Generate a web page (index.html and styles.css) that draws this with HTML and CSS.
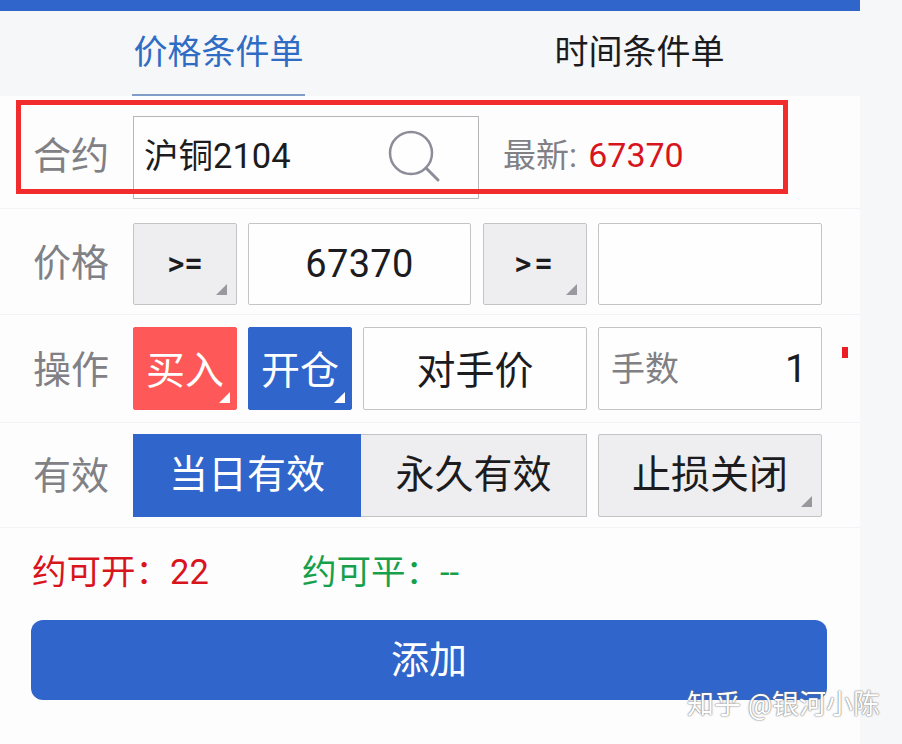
FILE: index.html
```html
<!DOCTYPE html>
<html lang="zh-CN">
<head>
    <meta charset="UTF-8">
    <meta name="viewport" content="width=device-width, initial-scale=1.0">
    <title>条件单</title>
    <link rel="stylesheet" href="styles.css">
</head>
<body>
    <div class="panel">
        <div class="top-bar"></div>
        <div class="tabs">
            <div class="tab tab-active"><span>价格条件单</span></div>
            <div class="tab"><span>时间条件单</span></div>
        </div>

        <div class="row row-contract">
            <div class="label">合约</div>
            <div class="contract-field">
                <span class="contract-name">沪铜2104</span>
                <svg class="search-icon" width="54" height="54" viewBox="0 0 54 54">
                    <circle cx="23" cy="23" r="21" fill="none" stroke="#8d8d99" stroke-width="2.5"/>
                    <path d="M38 38 L50 50" fill="none" stroke="#8d8d99" stroke-width="3" stroke-linecap="round"/>
                </svg>
            </div>
            <div class="latest">最新: <span class="latest-price">67370</span></div>
        </div>

        <div class="row row-price">
            <div class="label">价格</div>
            <div class="cell cell-gray w-104 op-text corner">&gt;=</div>
            <div class="cell w-223 price-value">67370</div>
            <div class="cell cell-gray w-104 op-text op-wide corner">&gt;=</div>
            <div class="cell w-224"></div>
        </div>

        <div class="row row-action">
            <div class="label">操作</div>
            <div class="cell cell-red w-104 corner corner-white">买入</div>
            <div class="cell cell-blue w-104 corner corner-white">开仓</div>
            <div class="cell w-224">对手价</div>
            <div class="cell w-224 qty">
                <span class="qty-label">手数</span>
                <span>1</span>
            </div>
        </div>

        <div class="row row-valid">
            <div class="label">有效</div>
            <div class="segment">
                <div class="cell cell-blue seg-left">当日有效</div>
                <div class="cell cell-gray seg-right">永久有效</div>
            </div>
            <div class="cell cell-gray w-224 corner">止损关闭</div>
        </div>

        <div class="amounts">
            <div class="amount-open">约可开：22</div>
            <div class="amount-close">约可平：--</div>
        </div>

        <div class="add-btn">添加</div>
    </div>

    <div class="red-box"></div>
    <div class="red-dot"></div>
    <div class="watermark">知乎 @银河小陈</div>
</body>
</html>
```

FILE: styles.css
```css
* {
    box-sizing: border-box;
}
html, body {
    margin: 0;
    height: 744px;
    overflow: hidden;
}
body {
    position: relative;
    font-family: Roboto, "Noto Sans CJK SC", sans-serif;
    background-color: #f6f7f9;
    color: #1c1c1e;
}
.panel {
    width: 860px;
    height: 744px;
    background-color: #fdfdfe;
}
.top-bar {
    height: 11px;
    background-color: #3065cb;
}
.tabs {
    display: flex;
    height: 85px;
    background-color: #f6f7f9;
    padding-left: 132px;
}
.tab {
    width: 173px;
    height: 85px;
    font-size: 34px;
    line-height: 82px;
    text-align: center;
    white-space: nowrap;
}
.tab + .tab {
    margin-left: 248px;
}
.tab-active {
    color: #2f6cc4;
    border-bottom: 2px solid #7f9dc8;
}
.row {
    display: flex;
    align-items: center;
    gap: 11px;
    padding-left: 33px;
    border-bottom: 1px solid #f3f3f6;
}
.row-contract {
    height: 113px;
    padding-top: 10px;
}
.row-price {
    height: 106px;
    padding-top: 4px;
}
.row-action {
    height: 108px;
}
.row-valid {
    height: 105px;
}
.label {
    width: 89px;
    padding-bottom: 5px;
    font-size: 38px;
    color: #808085;
    white-space: nowrap;
}
.row-contract .label {
    padding-bottom: 9px;
}
.row-price .label {
    padding-bottom: 8px;
}
.contract-field {
    display: flex;
    align-items: center;
    justify-content: space-between;
    width: 346px;
    height: 83px;
    padding: 0 36px 0 10px;
    border: 1px solid #b5b5ba;
    background-color: #fefefe;
}
.contract-name {
    font-size: 34.5px;
    margin-top: -8px;
}
.latest {
    margin-left: 13px;
    margin-top: -8px;
    font-size: 33px;
    color: #808085;
    white-space: nowrap;
}
.latest-price {
    margin-left: 3px;
    font-size: 34px;
    color: #d8141c;
}
.cell {
    position: relative;
    display: flex;
    align-items: center;
    justify-content: center;
    height: 83px;
    font-size: 39px;
    border: 1px solid #c4c4c8;
    border-radius: 2px;
    background-color: #fefefe;
    white-space: nowrap;
}
.row-price .cell {
    height: 82px;
}
.cell-gray {
    background-color: #eeeef0;
}
.cell-red {
    color: #fff;
    background-color: #fe5858;
    border-color: #fe5858;
}
.cell-blue {
    color: #fff;
    background-color: #3065cb;
    border-color: #3065cb;
}
.w-104 {
    width: 104px;
}
.w-223 {
    width: 223px;
    margin-right: 1px;
}
.w-224 {
    width: 224px;
}
.row-action .cell {
    padding-bottom: 4px;
}
.row-valid .cell {
    padding-bottom: 9px;
}
.op-text {
    font-size: 33px;
    font-weight: 500;
}
.op-wide {
    letter-spacing: 3px;
}
.price-value {
    font-size: 38px;
    letter-spacing: 0.3px;
}
.corner::after {
    content: "";
    position: absolute;
    right: 9px;
    bottom: 9px;
    border-style: solid;
    border-width: 0 0 11px 11px;
    border-color: transparent transparent #98989e transparent;
}
.corner-white::after {
    right: 6px;
    bottom: 6px;
    border-bottom-color: #fff;
}
.row-action .qty {
    justify-content: space-between;
    padding: 0 14px 0 12px;
}
.qty-label {
    font-size: 34px;
    color: #808085;
    margin-top: -4px;
}
.segment {
    display: flex;
    width: 454px;
}
.seg-left {
    width: 228px;
    border-radius: 0;
}
.seg-right {
    width: 226px;
    border-radius: 0;
    border-left: none;
}
.amounts {
    display: flex;
    height: 92px;
    padding: 21px 0 0 32px;
    font-size: 34.5px;
    line-height: 46px;
    white-space: nowrap;
}
.amount-open {
    width: 270px;
    color: #d8141c;
}
.amount-close {
    color: #17a04a;
}
.add-btn {
    display: flex;
    align-items: center;
    justify-content: center;
    width: 796px;
    height: 80px;
    margin-left: 31px;
    padding-bottom: 8px;
    font-size: 38px;
    color: #fff;
    background-color: #3065cb;
    border-radius: 12px;
}
/* annotation drawn on top of the screenshot */
.red-box {
    position: absolute;
    left: 16px;
    top: 100px;
    width: 772px;
    height: 94px;
    border: 5px solid #f22c2c;
}
.red-dot {
    position: absolute;
    left: 842px;
    top: 347px;
    width: 6px;
    height: 11px;
    background-color: #ec1c24;
}
.watermark {
    position: absolute;
    left: 687px;
    top: 686px;
    font-size: 27px;
    line-height: 38px;
    color: #fff;
    white-space: nowrap;
    text-shadow: 0 0 2px #777, 0 0 1px #777;
}
```
